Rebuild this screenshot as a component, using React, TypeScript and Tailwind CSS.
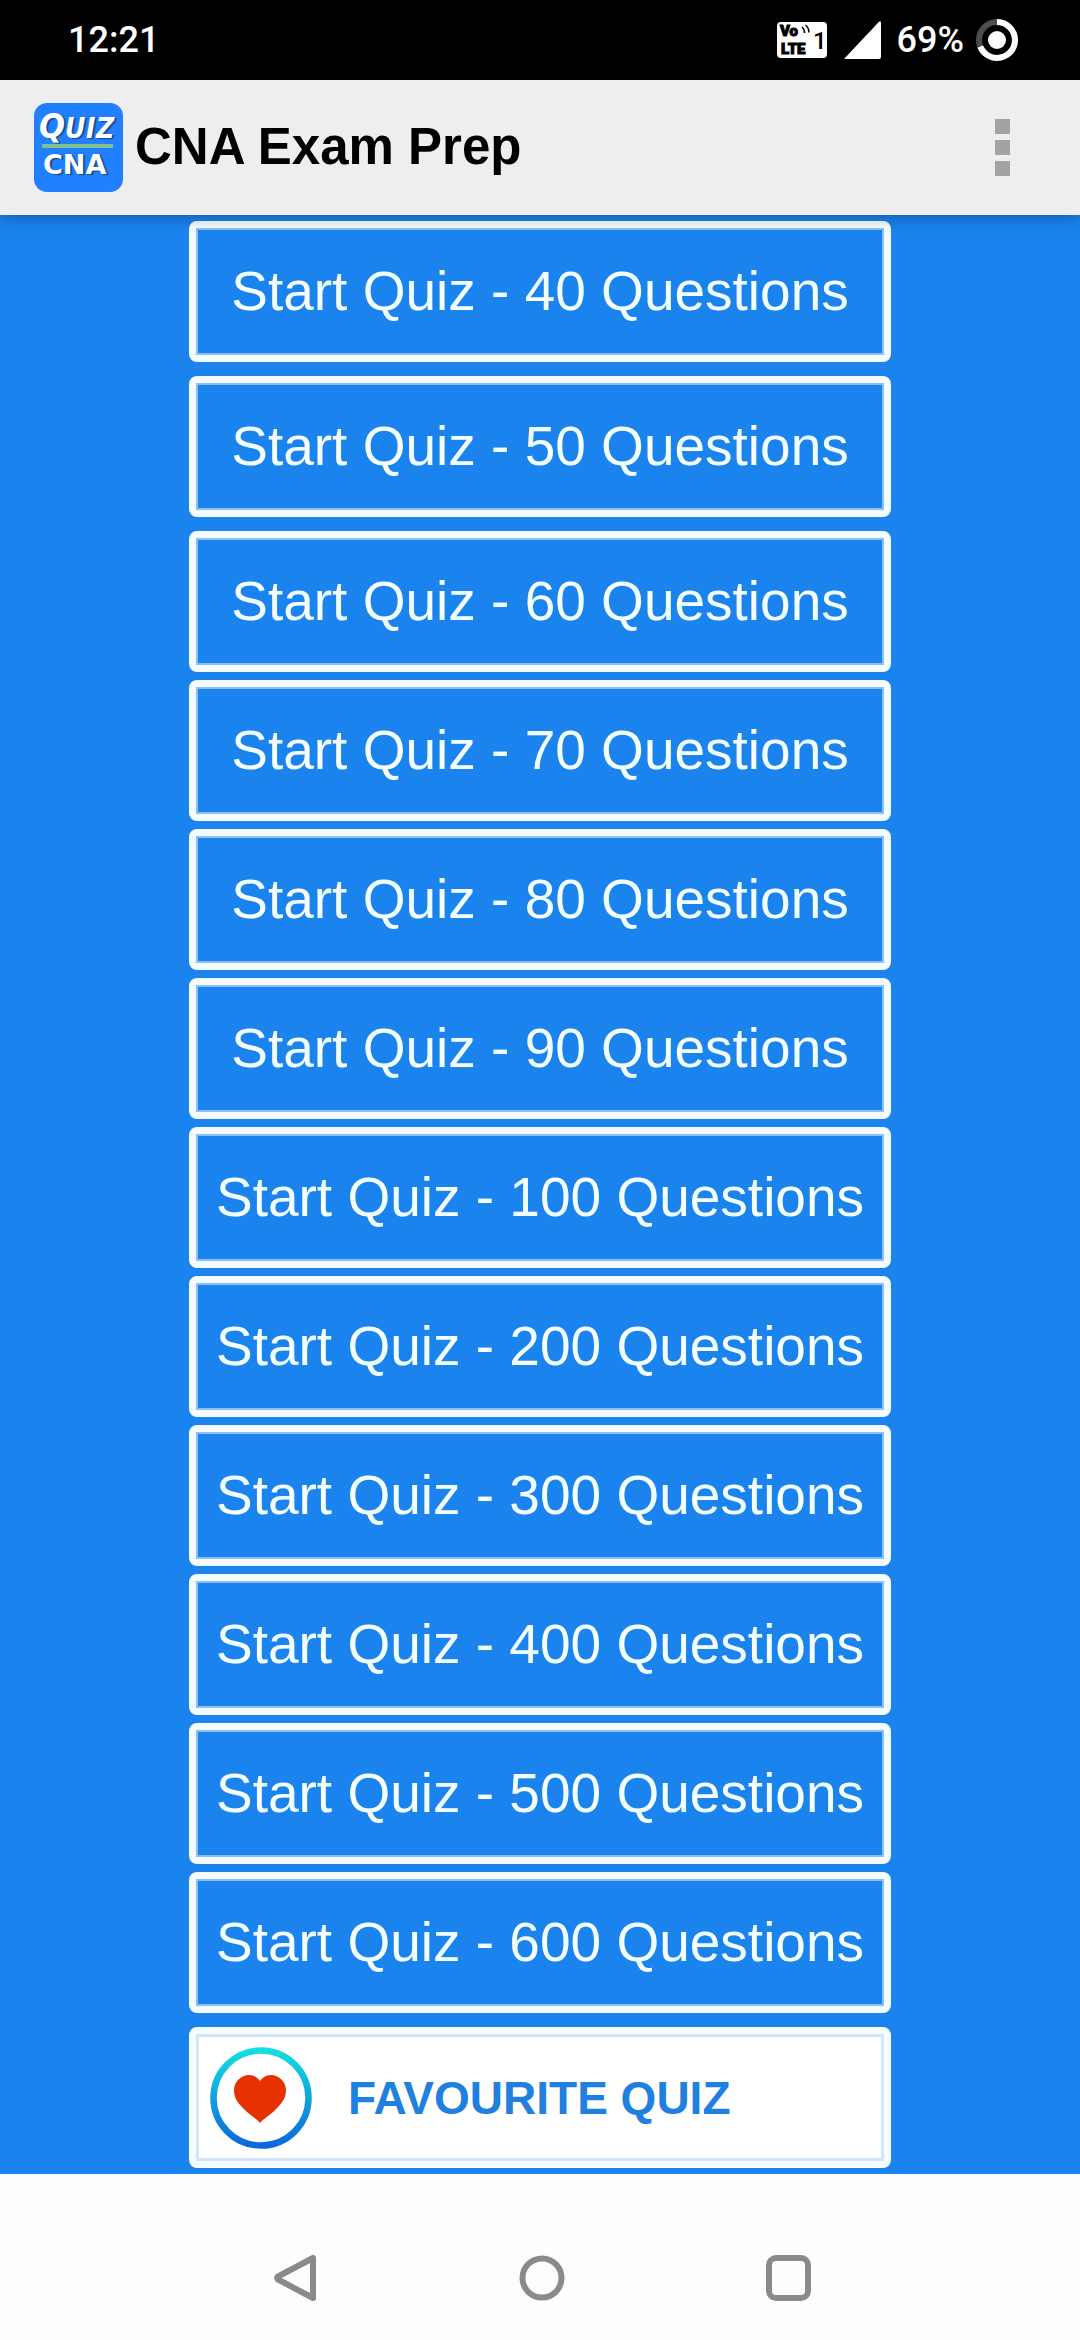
import React, { useState } from 'react';

const SHORT_QUIZZES = [40, 50];
const LONG_QUIZZES = [60, 70, 80, 90, 100, 200, 300, 400, 500, 600];

const SignalStatus: React.FC = () => (
  <div className="flex items-center">
    <svg width="50" height="36" viewBox="0 0 50 36" className="mr-4">
      <rect width="50" height="36" rx="4" fill="#fff" />
      <g fill="#000" stroke="#000" fontFamily="Roboto, sans-serif" fontWeight="900">
        <text x="3" y="14" fontSize="15" strokeWidth="1">Vo</text>
        <text x="4" y="32" fontSize="15" strokeWidth="1">LTE</text>
        <text x="36" y="27" fontSize="24" fontWeight="500" strokeWidth="0">1</text>
      </g>
      <path d="M25 5q2.500 2 2.500 6M28.500 3q3.500 3 3.500 7.500" fill="none" stroke="#000" strokeWidth="1.600" />
    </svg>
    <svg width="38" height="38" viewBox="0 0 38 38" className="mr-4">
      <path d="M1 38 35.500 1.200Q38 -1 38 2V36Q38 38 36 38Z" fill="#fff" />
    </svg>
    <span className="mr-3 font-medium">69%</span>
    <svg width="42" height="42" viewBox="0 0 42 42">
      <circle cx="21" cy="21" r="18" fill="none" stroke="#4d4d4d" strokeWidth="6" />
      <circle
        cx="21"
        cy="21"
        r="18"
        fill="none"
        stroke="#fff"
        strokeWidth="6"
        pathLength="100"
        strokeDasharray="69 31"
        transform="rotate(-90 21 21)"
      />
      <circle cx="21" cy="21" r="9" fill="#fff" />
    </svg>
  </div>
);

// lettering gets its drop shadow from CSS so each word is only drawn once
const AppLogo: React.FC = () => (
  <svg width="89" height="89" viewBox="0 0 89 89" className="shrink-0">
    <rect width="89" height="89" rx="13" fill="#2080ff" />
    <g className="[text-shadow:2px_1px_1px_#17498f]" fill="#fff">
      <text
        y="35"
        fontFamily="'Liberation Sans Narrow', 'DejaVu Sans Condensed', sans-serif"
        fontWeight="700"
        fontStyle="italic"
      >
        <tspan x="5" fontSize="34">Q</tspan>
        <tspan x="31" fontSize="28">U</tspan>
        <tspan x="52" fontSize="28">I</tspan>
        <tspan x="62" fontSize="28">Z</tspan>
      </text>
      <text x="9" y="71" fontFamily="'DejaVu Sans', sans-serif" fontWeight="700" fontSize="27">CNA</text>
    </g>
    <rect x="8" y="41" width="71" height="4" fill="#7fc08c" />
  </svg>
);

const HeartIcon: React.FC = () => (
  <svg width="102" height="102" viewBox="0 0 102 102" className="shrink-0">
    <defs>
      <linearGradient id="ring" x1="0" y1="0" x2="0" y2="1">
        <stop offset="0" stopColor="#12dfe0" />
        <stop offset="1" stopColor="#0a68dc" />
      </linearGradient>
    </defs>
    <circle cx="51" cy="51" r="47.500" fill="#fff" stroke="url(#ring)" strokeWidth="6.500" />
    <path
      d="M50 76C47 72 38 67 32 60C27 55 24 50 24 43C24 35 31 28 39 28C44 28 48 31 50 34C52 31 56 28 61 28C69 28 76 35 76 43C76 50 73 55 68 60C62 67 53 72 50 76Z"
      fill="#e63200"
    />
  </svg>
);

const QuizButton: React.FC<{ count: number; onStart: (count: number) => void }> = ({ count, onStart }) => (
  <button
    onClick={() => onStart(count)}
    className="relative h-[141px] w-full rounded-lg border-[7px] border-[#f4fbff] pb-0.5 text-[55px] leading-[64px] whitespace-nowrap text-[#f4ffff]"
  >
    <span className="absolute inset-0 border-2 border-[#8cc0f5]" />
    Start Quiz - {count} Questions
  </button>
);

const App: React.FC = () => {
  const [, setActiveCount] = useState<number | null>(null);

  return (
    <div className="flex min-h-screen flex-col bg-[#fdfdfe] font-['Liberation_Sans',Arial,sans-serif]">
      {/* Status bar */}
      <div className="flex h-20 items-center justify-between bg-black pr-[62px] pl-[68px] font-[Roboto,sans-serif] text-[36px] leading-[42px] text-white">
        <span className="font-medium">12:21</span>
        <SignalStatus />
      </div>

      {/* App bar */}
      <header className="relative z-10 flex h-[135px] items-center gap-3 bg-[#eeeeee] pr-[46px] pl-[34px] shadow-[0_3px_14px_rgba(0,0,0,0.28)]">
        <AppLogo />
        <h1 className="flex-1 pb-0.5 text-[51px] leading-[60px] font-bold text-black">CNA Exam Prep</h1>
        <button aria-label="More options" className="flex flex-col gap-[6px] px-6 py-4">
          <span className="size-[15px] bg-[#a3a3a3]" />
          <span className="size-[15px] bg-[#a3a3a3]" />
          <span className="size-[15px] bg-[#a3a3a3]" />
        </button>
      </header>

      {/* Quiz list */}
      <main className="flex flex-col items-center bg-[#1a83ed] py-[6px]">
        <div className="flex w-[65%] flex-col gap-[14px]">
          {SHORT_QUIZZES.map(count => (
            <QuizButton key={count} count={count} onStart={setActiveCount} />
          ))}
          <div className="flex flex-col gap-2">
            {LONG_QUIZZES.map(count => (
              <QuizButton key={count} count={count} onStart={setActiveCount} />
            ))}
          </div>
          <button className="relative flex h-[141px] w-full items-center gap-9 rounded-lg border-[7px] border-[#f4fdff] bg-white pl-[14px] text-[46px] leading-[52px] font-bold text-[#1f80e0]">
            <span className="absolute inset-0 border-[3px] border-[#d3e5f8]" />
            <HeartIcon />
            FAVOURITE QUIZ
          </button>
        </div>
      </main>

      {/* System navigation */}
      <nav className="flex flex-1 items-center justify-center gap-[190px] pt-[42px] pl-1">
        <button aria-label="Back">
          <svg width="56" height="56" viewBox="0 0 56 56" fill="none" stroke="#8a8a8a" strokeWidth="6" strokeLinejoin="round">
            <path d="M45 8V48L10 29.500Q8 28 10 26.500Z" />
          </svg>
        </button>
        <button aria-label="Home">
          <svg width="56" height="56" viewBox="0 0 56 56" fill="none" stroke="#8a8a8a" strokeWidth="6">
            <circle cx="28" cy="28" r="19.500" />
          </svg>
        </button>
        <button aria-label="Recent apps">
          <svg width="56" height="56" viewBox="0 0 56 56" fill="none" stroke="#8a8a8a" strokeWidth="6">
            <rect x="9" y="8" width="39" height="40" rx="7" />
          </svg>
        </button>
      </nav>
    </div>
  );
};

export default App;
